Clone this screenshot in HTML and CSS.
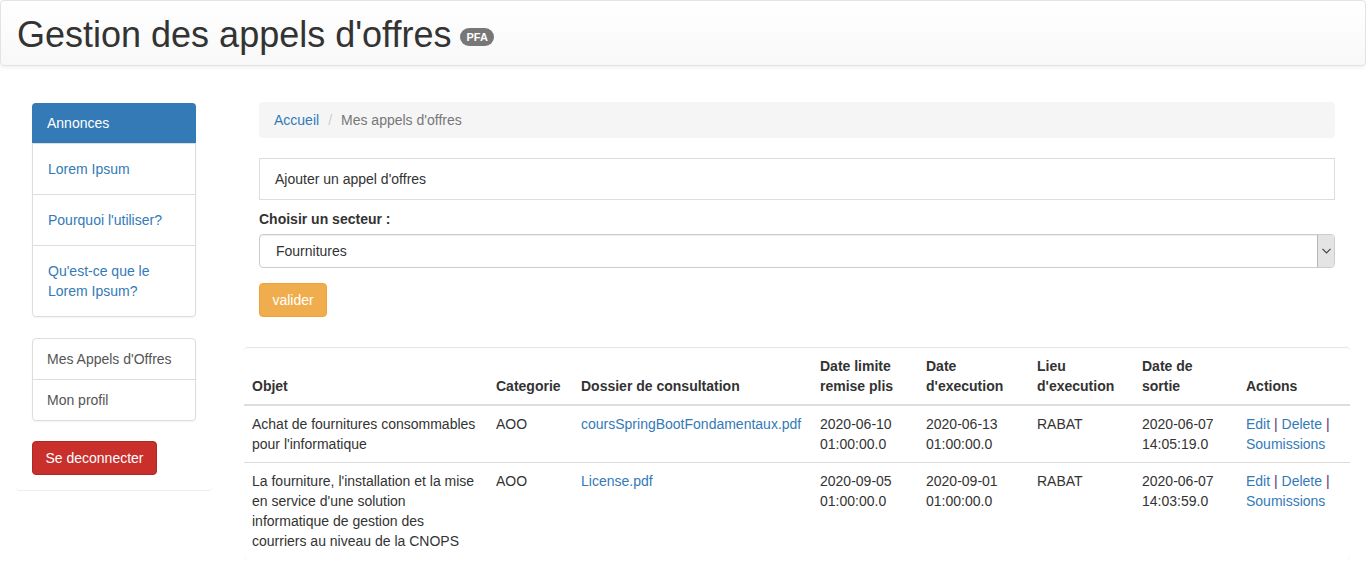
FILE: index.html
```html
<!DOCTYPE html>
<html lang="fr">
<head>
<meta charset="utf-8">
<title>Gestion des appels d'offres</title>
<link rel="stylesheet" href="styles.css">
</head>
<body>
<header class="topbar">
  <h1 class="title">Gestion des appels d'offres <span class="badge">PFA</span></h1>
</header>
<div class="layout">
  <aside class="sidebar">
    <div class="side-panel">
      <div class="list-group list-main">
        <div class="lg-item lg-active">Annonces</div>
        <a class="lg-item lg-link" href="#">Lorem Ipsum</a>
        <a class="lg-item lg-link" href="#">Pourquoi l'utiliser?</a>
        <a class="lg-item lg-link" href="#">Qu'est-ce que le Lorem Ipsum?</a>
      </div>
      <div class="list-group list-plain">
        <a class="lg-item lg-plain" href="#">Mes Appels d'Offres</a>
        <a class="lg-item lg-plain" href="#">Mon profil</a>
      </div>
      <button class="btn btn-danger">Se deconnecter</button>
    </div>
  </aside>
  <main class="main">
    <div class="form-zone">
      <ol class="breadcrumb">
        <li><a href="#">Accueil</a></li>
        <li class="bc-sep">/</li>
        <li class="bc-current">Mes appels d'offres</li>
      </ol>
      <div class="add-box">Ajouter un appel d'offres</div>
      <label class="field-label" for="secteur">Choisir un secteur :</label>
      <div class="select-wrap">
        <select id="secteur" class="select">
          <option>Fournitures</option>
        </select>
        <span class="select-arrow"><svg width="9" height="6" viewBox="0 0 9 6"><path d="M0.5 0.8 L4.5 4.8 L8.5 0.8" fill="none" stroke="#444" stroke-width="1.2"/></svg></span>
      </div>
      <button class="btn btn-warning">valider</button>
    </div>
    <div class="table-wrap">
      <table class="table">
        <colgroup>
          <col class="c-objet"><col class="c-cat"><col class="c-doss"><col class="c-dlim"><col class="c-dexe"><col class="c-lieu"><col class="c-sort"><col class="c-act">
        </colgroup>
        <thead>
          <tr>
            <th>Objet</th>
            <th>Categorie</th>
            <th>Dossier de consultation</th>
            <th>Date limite remise plis</th>
            <th>Date d'execution</th>
            <th>Lieu d'execution</th>
            <th>Date de sortie</th>
            <th>Actions</th>
          </tr>
        </thead>
        <tbody>
          <tr>
            <td>Achat de fournitures consommables pour l'informatique</td>
            <td>AOO</td>
            <td><a href="#">coursSpringBootFondamentaux.pdf</a></td>
            <td>2020-06-10 01:00:00.0</td>
            <td>2020-06-13 01:00:00.0</td>
            <td>RABAT</td>
            <td>2020-06-07 14:05:19.0</td>
            <td><a href="#">Edit</a> <span class="sep">|</span> <a href="#">Delete</a> <span class="sep">|</span> <a href="#">Soumissions</a></td>
          </tr>
          <tr>
            <td>La fourniture, l'installation et la mise en service d'une solution informatique de gestion des courriers au niveau de la CNOPS</td>
            <td>AOO</td>
            <td><a href="#">License.pdf</a></td>
            <td>2020-09-05 01:00:00.0</td>
            <td>2020-09-01 01:00:00.0</td>
            <td>RABAT</td>
            <td>2020-06-07 14:03:59.0</td>
            <td><a href="#">Edit</a> <span class="sep">|</span> <a href="#">Delete</a> <span class="sep">|</span> <a href="#">Soumissions</a></td>
          </tr>
        </tbody>
      </table>
    </div>
  </main>
</div>
</body>
</html>
```
FILE: styles.css
```css
* { box-sizing: border-box; }
html, body { margin: 0; padding: 0; }
body {
  font-family: "Liberation Sans", Arial, Helvetica, sans-serif;
  font-size: 14px;
  line-height: 20px;
  color: #333;
  background: #fff;
  width: 1366px;
}
a { color: #337ab7; text-decoration: none; }

.topbar {
  height: 66px;
  background: linear-gradient(to bottom, #ffffff 0%, #f8f8f8 100%);
  border: 1px solid #e3e3e3;
  border-radius: 4px;
  box-shadow: 0 1px 5px rgba(0, 0, 0, 0.08);
  padding: 0 16px;
}
.title {
  margin: 0;
  padding-top: 14px;
  font-size: 36px;
  line-height: 40px;
  font-weight: 400;
  color: #333;
  display: flex;
  align-items: center;
  gap: 9px;
}
.badge {
  display: inline-block;
  background: #777;
  color: #fff;
  font-size: 11px;
  font-weight: 700;
  line-height: 12px;
  padding: 3px 6px 3px;
  border-radius: 10px;
  margin-top: 4px;
}

.layout {
  display: flex;
  gap: 32px;
  padding: 36px 16px 0 16px;
}
.sidebar { width: 196px; flex: none; }
.side-panel {
  padding: 1px 16px 15px 16px;
  border-radius: 4px;
  box-shadow: 0 1px 1px rgba(0, 0, 0, 0.07);
}
.list-group {
  display: flex;
  flex-direction: column;
  border: 1px solid #ddd;
  border-radius: 4px;
  box-shadow: 0 1px 2px rgba(0, 0, 0, 0.05);
}
.list-main { margin-bottom: 21px; }
.list-plain { margin-bottom: 20px; }
.lg-item {
  display: block;
  border-top: 1px solid #ddd;
}
.lg-item:first-child { border-top: 0; }
.lg-active {
  background: #337ab7;
  color: #fff;
  padding: 10px 15px;
  margin: -1px -1px 0 -1px;
  border-top: 1px solid #337ab7;
  border-radius: 4px 4px 0 0;
}
.lg-link { color: #337ab7; padding: 15px 15px; }
.lg-plain { color: #555; padding: 10px 14px; }

.btn {
  font-family: inherit;
  font-size: 14px;
  line-height: 20px;
  padding: 6px 12px;
  border-radius: 4px;
  border: 1px solid transparent;
  color: #fff;
  cursor: pointer;
  display: inline-block;
}
.btn-danger {
  background: #c9302c;
  border-color: #ac2925;
  width: 125px;
}
.btn-warning {
  background: #f0ad4e;
  border-color: #eea236;
  width: 68px;
  margin-top: 15px;
}

.main { flex: 1; min-width: 0; }
.form-zone {
  padding: 0 15px;
  display: flex;
  flex-direction: column;
  align-items: flex-start;
}
.breadcrumb {
  list-style: none;
  margin: 0 0 20px 0;
  padding: 8px 15px;
  background: #f5f5f5;
  border-radius: 4px;
  display: flex;
  gap: 8px;
  width: 100%;
}
.bc-sep { color: #ccc; margin: 0 1px; }
.bc-current { color: #777; }
.add-box {
  width: 100%;
  border: 1px solid #ddd;
  padding: 10px 15px;
  margin-bottom: 9px;
}
.field-label {
  font-weight: 700;
  margin-bottom: 5px;
  display: block;
}
.select-wrap {
  position: relative;
  width: 100%;
}
.select {
  -webkit-appearance: none;
  appearance: none;
  display: block;
  width: 100%;
  height: 34px;
  margin: 0;
  font-family: inherit;
  font-size: 14px;
  color: #333;
  padding: 6px 16px;
  border: 1px solid #ccc;
  border-radius: 4px;
  background: #fff;
  box-shadow: inset 0 1px 1px rgba(0, 0, 0, 0.075);
}
.select-arrow {
  position: absolute;
  right: 1px;
  top: 1px;
  bottom: 1px;
  width: 17px;
  background: #e4e4e4;
  border-left: 1px solid #b5b5b5;
  border-radius: 0 3px 3px 0;
  display: flex;
  align-items: center;
  justify-content: center;
}

.table-wrap {
  margin-top: 30px;
  border-top: 1px solid #e5e5e5;
  border-radius: 4px;
  box-shadow: 0 1px 1px rgba(0, 0, 0, 0.07);
}
.table {
  width: 100%;
  border-collapse: collapse;
  table-layout: fixed;
}
.c-objet { width: 244px; }
.c-cat { width: 85px; }
.c-doss { width: 239px; }
.c-dlim { width: 106px; }
.c-dexe { width: 111px; }
.c-lieu { width: 105px; }
.c-sort { width: 104px; }
.c-act { width: 112px; }
.table th, .table td {
  padding: 8px;
  text-align: left;
  vertical-align: top;
  line-height: 20px;
}
.table th {
  vertical-align: bottom;
  font-weight: 700;
  border-bottom: 2px solid #ddd;
}
.table tbody tr + tr td { border-top: 1px solid #ddd; }
.table td { word-wrap: break-word; }
.sep { color: #5e2a72; }
```
